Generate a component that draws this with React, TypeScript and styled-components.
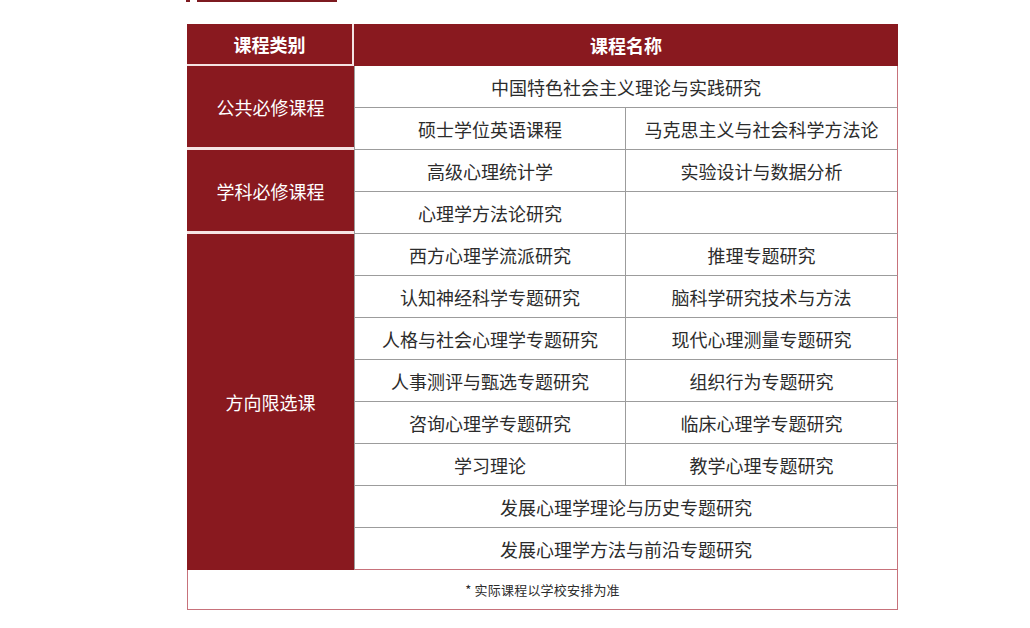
import styled, { createGlobalStyle } from "styled-components";

const GlobalStyle = createGlobalStyle`
  body {
    margin: 0;
    background: #ffffff;
    font-family: "Noto Sans CJK SC", "Noto Sans", sans-serif;
  }
`;

const Page = styled.div`
  width: 1030px;
  height: 628px;
  padding-left: 187px;
  box-sizing: border-box;
  display: flex;
  flex-direction: column;
`;

const TitleEdge = styled.div`
  display: flex;
  align-items: flex-start;
  height: 24px;
  margin-left: -1px;
`;

const Mark = styled.div`
  width: 4px;
  height: 2px;
  background: #7d1a20;
`;

const Underline = styled.div`
  width: 140px;
  height: 2px;
  margin-left: 7px;
  background: #7d1a20;
`;

const Grid = styled.div`
  width: 711px;
  display: grid;
  grid-template-columns: 167px 272px 272px;
  grid-template-rows: repeat(13, 42px) 40px;
`;

const red = "#89191f";
const line = "#9c9c9c";
const edge = "#c7727b";

const Cell = styled.div`
  display: flex;
  align-items: center;
  justify-content: center;
  box-sizing: border-box;
  font-size: 18px;
  white-space: nowrap;
`;

const HeadCell = styled(Cell)<{ $first?: boolean }>`
  background: ${red};
  color: #ffffff;
  font-weight: 700;
  grid-row: 1;
  grid-column: ${(p) => (p.$first ? "1" : "2 / 4")};
  border-right: ${(p) => (p.$first ? "2px solid #f4e2e2" : "none")};
  border-bottom: ${(p) => (p.$first ? "2px solid #f4e2e2" : "none")};
`;

const Category = styled(Cell)<{ $start: number; $span: number; $last?: boolean }>`
  background: ${red};
  color: #ffffff;
  grid-column: 1;
  grid-row: ${(p) => `${p.$start} / span ${p.$span}`};
  border-bottom: ${(p) => (p.$last ? "none" : "3px solid #f6e4e4")};
`;

const Course = styled(Cell)<{ $row: number; $col: "left" | "right" | "wide"; $last?: boolean }>`
  color: #2c2c2c;
  grid-row: ${(p) => p.$row};
  grid-column: ${(p) => (p.$col === "left" ? "2" : p.$col === "right" ? "3" : "2 / 4")};
  border-left: ${(p) => (p.$col === "right" ? "none" : `1px solid ${line}`)};
  border-right: 1px solid ${(p) => (p.$col === "left" ? line : edge)};
  border-bottom: 1px solid ${(p) => (p.$last ? edge : line)};
`;

const Footer = styled.div`
  grid-row: 14;
  grid-column: 1 / 4;
  display: flex;
  align-items: center;
  justify-content: center;
  border: 1px solid ${edge};
  border-top: none;
  font-size: 13px;
  color: #2c2c2c;
  letter-spacing: 0.2px;
`;

type Row = [string, string?];

const rows: Row[] = [
  ["中国特色社会主义理论与实践研究"],
  ["硕士学位英语课程", "马克思主义与社会科学方法论"],
  ["高级心理统计学", "实验设计与数据分析"],
  ["心理学方法论研究", ""],
  ["西方心理学流派研究", "推理专题研究"],
  ["认知神经科学专题研究", "脑科学研究技术与方法"],
  ["人格与社会心理学专题研究", "现代心理测量专题研究"],
  ["人事测评与甄选专题研究", "组织行为专题研究"],
  ["咨询心理学专题研究", "临床心理学专题研究"],
  ["学习理论", "教学心理专题研究"],
  ["发展心理学理论与历史专题研究"],
  ["发展心理学方法与前沿专题研究"],
];

const groups = [
  { name: "公共必修课程", start: 2, span: 2 },
  { name: "学科必修课程", start: 4, span: 2 },
  { name: "方向限选课", start: 6, span: 8 },
];

export default function App() {
  return (
    <>
      <GlobalStyle />
      <Page>
        <TitleEdge>
          <Mark />
          <Underline />
        </TitleEdge>
        <Grid>
          <HeadCell $first>课程类别</HeadCell>
          <HeadCell>课程名称</HeadCell>
          {groups.map((g, i) => (
            <Category key={g.name} $start={g.start} $span={g.span} $last={i === groups.length - 1}>
              {g.name}
            </Category>
          ))}
          {rows.map((r, i) => {
            const row = i + 2;
            const last = i === rows.length - 1;
            if (r.length === 1) {
              return (
                <Course key={row} $row={row} $col="wide" $last={last}>
                  {r[0]}
                </Course>
              );
            }
            return [
              <Course key={row + "l"} $row={row} $col="left" $last={last}>
                {r[0]}
              </Course>,
              <Course key={row + "r"} $row={row} $col="right" $last={last}>
                {r[1]}
              </Course>,
            ];
          })}
          <Footer>* 实际课程以学校安排为准</Footer>
        </Grid>
      </Page>
    </>
  );
}
